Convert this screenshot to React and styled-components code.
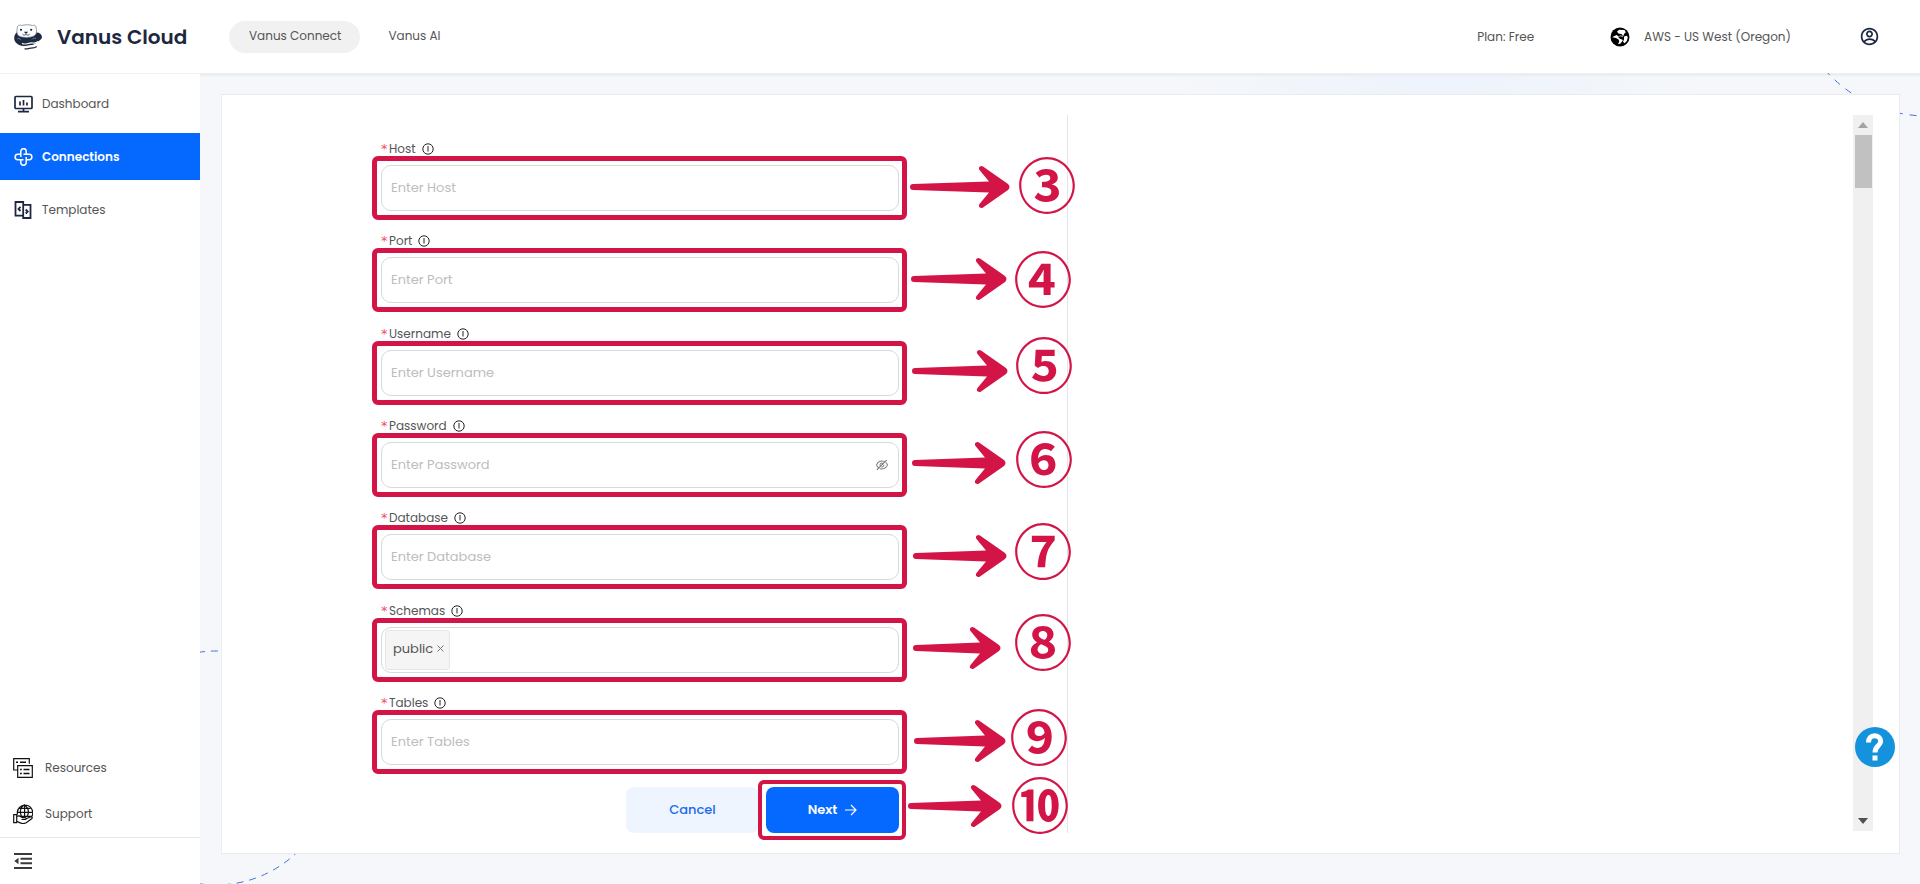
import React from "react";
import styled, { createGlobalStyle, css } from "styled-components";
import { AiOutlineEyeInvisible } from "react-icons/ai";
import { RiAccountCircleLine } from "react-icons/ri";

const crimson = "#d31446";
const blue = "#0568ff";

const GlobalStyle = createGlobalStyle`
  *, *::before, *::after { box-sizing: border-box; }
  body {
    margin: 0;
    font-family: Poppins, Inter, "Liberation Sans", sans-serif;
    font-size: 12px;
    line-height: 20px;
    color: #555;
    background: #fff;
  }
  button, input { font: inherit; color: inherit; }
  svg { display: block; flex: none; }
`;

const Page = styled.div`
  display: flex;
  flex-direction: column;
  min-height: 100vh;
`;

const Header = styled.header`
  display: flex;
  align-items: center;
  height: 73px;
  padding: 0 40px 0 14px;
  background: #fff;
`;

const Brand = styled.a`
  display: flex;
  align-items: center;
  gap: 15px;
  width: 215px;
  color: #1d2740;
  font-size: 20px;
  font-weight: 600;
  line-height: 32px;
  text-decoration: none;
  white-space: nowrap;
`;

const ProductNav = styled.nav`
  display: flex;
  gap: 8px;
`;

const ProductTab = styled.button`
  height: 32px;
  padding: 0 19px 2px 20px;
  border: 0;
  border-radius: 16px;
  background: ${(p) => (p.$active ? "#f1f1f1" : "transparent")};
`;

const HeaderTools = styled.div`
  display: flex;
  align-items: center;
  gap: 68px;
  margin-left: auto;
`;

const Plan = styled.span`
  margin-right: 8px;
`;

const PlainButton = styled.button`
  display: flex;
  align-items: center;
  gap: 14px;
  padding: 0;
  border: 0;
  background: none;
`;

const Body = styled.div`
  display: flex;
  flex: 1;
`;

const Sidebar = styled.aside`
  display: flex;
  flex-direction: column;
  width: 200px;
  flex: none;
  background: #fff;
  border-top: 1px solid #f3f3f3;
`;

const MainNav = styled.nav`
  display: flex;
  flex-direction: column;
  gap: 6px;
  padding-top: 6px;
`;

const navLink = css`
  display: flex;
  align-items: center;
  color: #555;
  text-decoration: none;
`;

const NavLink = styled.a`
  ${navLink}
  gap: 9px;
  height: 47px;
  padding: 0 14px;
  ${(p) =>
    p.$active &&
    css`
      background: ${blue};
      color: #fff;
      font-weight: 600;
    `}
`;

const FootNav = styled.nav`
  margin-top: auto;
`;

const FootLink = styled.a`
  ${navLink}
  gap: 12px;
  height: 46px;
  padding: 0 13px;
`;

const CollapseButton = styled.button`
  display: flex;
  align-items: center;
  width: 100%;
  height: 47px;
  padding: 0 14px;
  border: 0;
  border-top: 1px solid #e6e8e6;
  background: none;
`;

const Main = styled.main`
  position: relative;
  display: flex;
  flex: 1;
  min-width: 0;
  padding: 21px 20px 30px 21px;
  background: radial-gradient(ellipse 260px 60px at 72% 10px, #edf3fc, transparent), #f5f7fa;
  box-shadow: inset 0 3px 0 #eceff2;
  overflow: hidden;
`;

const CornerArc = styled.svg`
  position: absolute;
  ${(p) => (p.$place === "top" ? "top: 0; right: 0;" : "bottom: 0; left: 0;")}
`;

const Card = styled.section`
  position: relative;
  display: grid;
  grid-template-columns: minmax(0, 827fr) minmax(0, 785fr) 20px;
  flex: 1;
  padding: 20px 26px 20px 19px;
  background: #fff;
  border: 1px solid #e9ebef;
  border-left-color: #eceef3;
`;

const FormPane = styled.form`
  display: flex;
  flex-direction: column;
  gap: 22px;
  padding: 24px 168px 0 140px;
  border-right: 1px solid #e4e4e6;
`;

const Fields = styled.div`
  display: flex;
  flex: 1;
  flex-direction: column;
  justify-content: space-between;
  gap: 12px;
`;

const Field = styled.div`
  display: flex;
  flex-direction: column;
  gap: 6px;
`;

const Label = styled.label`
  display: flex;
  align-items: center;
  gap: 1px;
`;

const Required = styled.span`
  width: 7px;
  color: #f4476c;
  font-family: "DejaVu Sans", sans-serif;
  font-size: 13px;
`;

const LabelText = styled.span`
  margin-right: 5px;
`;

const Anchor = styled.div`
  position: relative;
  display: flex;
`;

const Control = styled.div`
  display: flex;
  align-items: center;
  flex: 1;
  min-width: 0;
  height: 46px;
  padding: 0 9px ${(p) => (p.$tags ? "0 3px" : "0 9px")};
  border: 1px solid #d5dbd6;
  border-radius: 10px;
`;

const TextInput = styled.input`
  flex: 1;
  min-width: 0;
  padding: 0;
  border: 0;
  outline: 0;
  background: none;
  font-size: 13px;
  &::placeholder { color: #bdbdbd; opacity: 1; }
`;

const Tag = styled.span`
  display: flex;
  align-items: center;
  gap: 4px;
  height: 40px;
  padding: 0 5px 2px 7px;
  border: 1px solid #e6e6e8;
  border-radius: 3px;
  background: #f5f5f5;
  font-size: 13px;
`;

const Actions = styled.div`
  display: flex;
  justify-content: flex-end;
  gap: 7px;
`;

const ActionButton = styled.button`
  display: flex;
  align-items: center;
  justify-content: center;
  gap: 8px;
  width: 133px;
  height: 46px;
  padding: 0 0 1px;
  border: 0;
  border-radius: 8px;
  font-size: 13px;
  font-weight: ${(p) => (p.$primary ? 600 : 500)};
  color: ${(p) => (p.$primary ? "#fff" : "#1a6bf0")};
  background: ${(p) => (p.$primary ? blue : "#eff5fe")};
`;

const Ring = styled.span`
  position: absolute;
  inset: ${(p) => (p.$tight ? "-7px -7px -7px -8px" : "-9px -8px -9px -9px")};
  border: ${(p) => (p.$tight ? 4 : 5)}px solid ${crimson};
  border-radius: 6px;
  pointer-events: none;
`;

const ArrowMark = styled.svg`
  position: absolute;
  left: calc(100% + ${(p) => p.$x}px);
  top: ${(p) => p.$y}px;
`;

// The circled numerals come from the CJK face; Liberation Sans keeps the line box short.
const StepMark = styled.span`
  position: absolute;
  left: calc(100% + ${(p) => p.$x}px);
  top: ${(p) => p.$y}px;
  width: 60px;
  color: ${crimson};
  font-family: "Liberation Sans", "Noto Sans CJK SC", sans-serif;
  font-size: 59px;
  font-weight: 700;
  line-height: 60px;
  text-align: center;
`;

const ScrollTrack = styled.div`
  display: flex;
  flex-direction: column;
  align-items: center;
  margin-bottom: 2px;
  background: #f0f0f0;
`;

const ScrollArrow = styled.span`
  display: flex;
  align-items: center;
  justify-content: center;
  height: 20px;
  ${(p) => p.$end && "margin-top: auto;"}
`;

const ScrollThumb = styled.span`
  width: 17px;
  height: 53px;
  background: #c1c1c1;
`;

const HelpButton = styled.button`
  position: absolute;
  right: 4px;
  bottom: 86px;
  width: 40px;
  height: 40px;
  padding: 0;
  border: 0;
  border-radius: 50%;
  background: #1493dc;
  color: #fff;
`;

const OtterLogo = () => (
  <svg width="28" height="26" viewBox="0 0 28 26" aria-hidden="true">
    <path d="M2.500 8.500C.5 10.500-.5 14 .8 17c2 4 7 5.500 12 5.200 5-.3 9-2.200 12-5.200 2-1.500 3.200-2.500 3.200-4-.3-2.500-2.300-4.500-5.500-4.500Z" fill="#1d2a42" />
    <path d="M3.500 2.500C4.500.8 6.500.8 7.500 1.500 11 .5 15.500.5 18.500 1.500 20 .8 21.700 1.300 22 3c.7 3.500 1 6.500-1 8.200-3 2.600-12 3-16 .8C2.300 10.500 2.800 6 3.500 2.500Z" fill="#fff" stroke="#6b7688" strokeWidth=".7" />
    <circle cx="7" cy="5.800" r="1.100" fill="#1d2a42" />
    <circle cx="17.200" cy="5.800" r="1.100" fill="#1d2a42" />
    <path d="M10 7.800h4l-1.200 1.700h-1.600Z" fill="#1d2a42" />
    <path d="M8.500 10.200c1.400 1.400 2.500 1 3.500 0 1 1 2.300 1.400 3.700 0" stroke="#1d2a42" strokeWidth=".8" fill="none" />
    <path d="M3 15c1.500-1.300 3-.6 3.700 1M18 15.500c.8-1.400 2.500-1.800 4-1" stroke="#7f8a9c" strokeWidth=".8" fill="none" />
    <path d="M8 19.500c4 1.800 7-1.500 11-.5 2 .4 3.500-.2 5-1.500M8 22.300c4 1 7-1.300 10-.8 2 .3 3.500-.2 5-1.300" stroke="#fff" strokeWidth="1.100" fill="none" />
    <path d="M11 24.800c3 .6 5-1.300 8-1 1.300.1 2.300-.2 3.300-1" stroke="#1d2a42" strokeWidth="1.300" fill="none" strokeLinecap="round" />
  </svg>
);

const GlobeIcon = () => (
  <svg width="20" height="20" viewBox="0 0 20 20" aria-hidden="true">
    <circle cx="10" cy="10" r="9.500" fill="#000" />
    <path d="M9 2.800 14.500 3l1.300 2.200-1.600 1.600-1 2.400-2.700-.8-2 .8L6.500 8 4 9.200l-1.800 1 3.800.8 2.500 1.500.8 1.700-1.300 3 2.500-.8 1.500-2 1-1.500L9.500 11.500 8 9.800l2.500-.6 2.500.5-1-2.500L8.500 6.500 7 4.800ZM14 9.500l3-.8.8 1.800-1 3.500-2.300 2.200-1.500-1.400 1-2.300Z" fill="#fff" />
  </svg>
);

const DashboardIcon = () => (
  <svg width="19" height="18" viewBox="0 0 19 18" fill="none" stroke="#1e2740" strokeWidth="1.700" aria-hidden="true">
    <rect x="1" y="1.500" width="17" height="12" rx="1" />
    <path d="M6 6.500v4M9.500 5v5.500M13 7.500v3M9.500 13.500v3M4 16.700h11" />
  </svg>
);

const ConnectionsIcon = () => (
  <svg width="19" height="18" viewBox="0 0 19 18" fill="none" stroke="#fff" strokeWidth="1.500" aria-hidden="true">
    <path d="M6.800 9V3.400a2.700 2.700 0 0 1 5.400 0v2.900M9.500 6.300h5.700a2.700 2.700 0 0 1 0 5.400h-3M12.200 9v5.600a2.700 2.700 0 0 1-5.400 0v-2.900M9.500 11.700H3.800a2.700 2.700 0 0 1 0-5.400h3" />
  </svg>
);

const TemplatesIcon = () => (
  <svg width="19" height="18" viewBox="0 0 19 18" fill="none" stroke="#1e2740" strokeWidth="1.800" aria-hidden="true">
    <path d="M9 14.700H1.500V1h7.700v3M9.200 3.800h7.300V17H9.200Z" />
    <path d="M6.500 5.800 4.500 8l2 2M11.700 8.500l2 2-2 2" />
  </svg>
);

const ResourcesIcon = () => (
  <svg width="20" height="20" viewBox="0 0 20 20" fill="none" stroke="#111" strokeWidth="1.200" aria-hidden="true">
    <path d="M4.500 12H.7V.7h15.600v5M4.700 7.700h14.600v11.600H4.700Z" />
    <path d="M3 4.200h2M7 4.200h6M7 11.500h1.800M10.500 11.500h6M7 15.500h1.800M10.500 15.500h6" strokeWidth="1.500" />
  </svg>
);

const SupportIcon = () => (
  <svg width="20" height="20" viewBox="0 0 20 20" fill="none" stroke="#111" strokeWidth="1.200" aria-hidden="true">
    <path d="M4.500 10.500a7.700 7.700 0 1 1 14 2.500M4 8.300h15.300M6 4.300h11.500M8.500 12.200c-2-3.700-1.500-8.500 2.800-11.500 4.200 3 4.800 7.500 3 11.500M11.600.7v12M6 12.300h12.500" />
    <path d="M.7 10.700h3v8h-3ZM3.700 12.500c2.500-1.300 4.300 0 5.500 1.200h3c1.300 0 1.300 1.800 0 1.800H8.500M12.500 15l5-2c1.500-.6 2.300.8 1.200 1.800l-5.500 3.900c-2 1-4.200 1-6 .2l-3.500-1.600" fill="#fff" />
  </svg>
);

const CollapseIcon = () => (
  <svg width="18" height="16" viewBox="0 0 18 16" fill="#3a3a3a" aria-hidden="true">
    <path d="M0 0h18v2H0ZM6.500 4.700H18v2H6.500ZM6.500 9.300H18v2H6.500ZM0 14h18v2H0ZM4.500 4.700v6.600L.3 8Z" />
  </svg>
);

const InfoIcon = () => (
  <svg width="12" height="12" viewBox="0 0 12 12" fill="none" stroke="#222" aria-hidden="true">
    <circle cx="6" cy="6" r="5.200" />
    <path d="M6 3v5.500" />
  </svg>
);

const NextArrow = () => (
  <svg width="12" height="12" viewBox="0 0 12 12" fill="none" stroke="#fff" strokeWidth="1.200" aria-hidden="true">
    <path d="M0 6h11M6 1l5 5-5 5" />
  </svg>
);

// The head keeps its shape; only the shaft grows with the width.
const Arrow = ({ x, y, w }) => (
  <ArrowMark $x={x} $y={y} width={w} height="42" viewBox={`0 0 ${w} 42`} aria-hidden="true">
    <path
      fill={crimson}
      d={`M3 18 L${w - 21} 15.500 L${w - 30.500} 4 Q${w - 32} 1.500 ${w - 30} .4 Q${w - 28.500} -.4 ${w - 27} .6
        L${w - 2} 18 Q${w + 1} 21 ${w - 2} 24 L${w - 27} 41.400 Q${w - 28.500} 42.400 ${w - 30} 41.600
        Q${w - 32} 40.500 ${w - 30.500} 38 L${w - 21} 26.500 L3 24 A3 3 0 0 1 3 18Z`}
    />
  </ArrowMark>
);

const Callout = ({ tight, arrow, mark, step }) => (
  <>
    <Ring $tight={tight} />
    <Arrow x={arrow[0]} y={arrow[1]} w={arrow[2]} />
    <StepMark $x={mark[0]} $y={mark[1]}>{step}</StepMark>
  </>
);

const fields = [
  { name: "Host", step: "③", arrow: [11, 1, 100], mark: [118, -7] },
  { name: "Port", step: "④", arrow: [12, 1, 96], mark: [114, -5] },
  { name: "Username", step: "⑤", arrow: [13, 0, 96], mark: [115, -12] },
  { name: "Password", step: "⑥", arrow: [13, 0, 94], mark: [115, -10], secret: true },
  { name: "Database", step: "⑦", arrow: [14, 1, 94], mark: [114, -10] },
  { name: "Schemas", step: "⑧", arrow: [14, 0, 88], mark: [114, -12], tag: "public" },
  { name: "Tables", step: "⑨", arrow: [15, 1, 92], mark: [110, -9] },
];

const FormField = ({ name, secret, tag, ...callout }) => {
  const id = name.toLowerCase();
  return (
    <Field>
      <Label htmlFor={id}>
        <Required>*</Required>
        <LabelText>{name}</LabelText>
        <InfoIcon />
      </Label>
      <Anchor>
        <Control $tags={Boolean(tag)}>
          {tag && (
            <Tag>
              {tag}
              <PlainButton type="button" aria-label={`Remove ${tag}`}>
                <svg width="7" height="7" viewBox="0 0 7 7" stroke="#777" aria-hidden="true">
                  <path d="M.5.5l6 6M6.500.5l-6 6" />
                </svg>
              </PlainButton>
            </Tag>
          )}
          <TextInput id={id} type={secret ? "password" : "text"} placeholder={tag ? undefined : `Enter ${name}`} />
          {secret && (
            <PlainButton type="button" aria-label="Show password">
              <AiOutlineEyeInvisible size={14} color="#777" />
            </PlainButton>
          )}
        </Control>
        <Callout {...callout} />
      </Anchor>
    </Field>
  );
};

export default function App() {
  return (
    <Page>
      <GlobalStyle />
      <Header>
        <Brand href="#">
          <OtterLogo />
          Vanus Cloud
        </Brand>
        <ProductNav>
          <ProductTab $active>Vanus Connect</ProductTab>
          <ProductTab>Vanus AI</ProductTab>
        </ProductNav>
        <HeaderTools>
          <Plan>Plan: Free</Plan>
          <PlainButton>
            <GlobeIcon />
            AWS - US West (Oregon)
          </PlainButton>
          <PlainButton aria-label="Account">
            <RiAccountCircleLine size={21} color="#1e2740" />
          </PlainButton>
        </HeaderTools>
      </Header>
      <Body>
        <Sidebar>
          <MainNav>
            <NavLink href="#dashboard"><DashboardIcon />Dashboard</NavLink>
            <NavLink href="#connections" $active><ConnectionsIcon />Connections</NavLink>
            <NavLink href="#templates"><TemplatesIcon />Templates</NavLink>
          </MainNav>
          <FootNav>
            <FootLink href="#resources"><ResourcesIcon />Resources</FootLink>
            <FootLink href="#support"><SupportIcon />Support</FootLink>
          </FootNav>
          <CollapseButton aria-label="Collapse menu"><CollapseIcon /></CollapseButton>
        </Sidebar>
        <Main>
          <CornerArc $place="top" width="140" height="60" viewBox="0 0 140 60" aria-hidden="true">
            <circle cx="147" cy="-93" r="136" fill="none" stroke="#4a6fdc" strokeDasharray="7 7" />
          </CornerArc>
          <CornerArc $place="bottom" width="140" height="240" viewBox="0 0 140 240" aria-hidden="true">
            <circle cx="16" cy="124" r="117" fill="none" stroke="#4a6fdc" strokeDasharray="7 6" />
          </CornerArc>
          <Card>
            <FormPane onSubmit={(e) => e.preventDefault()}>
              <Fields>
                {fields.map((f) => (
                  <FormField key={f.name} {...f} />
                ))}
              </Fields>
              <Actions>
                <ActionButton type="button">Cancel</ActionButton>
                <Anchor>
                  <ActionButton $primary>
                    Next
                    <NextArrow />
                  </ActionButton>
                  <Callout tight step="⑩" arrow={[9, -2, 94]} mark={[111, -9]} />
                </Anchor>
              </Actions>
            </FormPane>
            <div />
            <ScrollTrack aria-hidden="true">
              <ScrollArrow>
                <svg width="10" height="6" viewBox="0 0 10 6"><path d="M5 0l5 6H0Z" fill="#a3a3a3" /></svg>
              </ScrollArrow>
              <ScrollThumb />
              <ScrollArrow $end>
                <svg width="10" height="6" viewBox="0 0 10 6"><path d="M0 0h10L5 6Z" fill="#505050" /></svg>
              </ScrollArrow>
            </ScrollTrack>
            <HelpButton aria-label="Help">
              <svg width="40" height="40" viewBox="0 0 40 40" fill="none" stroke="#fff" strokeWidth="5" aria-hidden="true">
                <path d="M13.500 15.500C13.500 11 16 8.700 19.500 8.700S25.700 11 25.700 14.300C25.700 19 20 18.500 20 25.500M20 28.500v5" />
              </svg>
            </HelpButton>
          </Card>
        </Main>
      </Body>
    </Page>
  );
}
